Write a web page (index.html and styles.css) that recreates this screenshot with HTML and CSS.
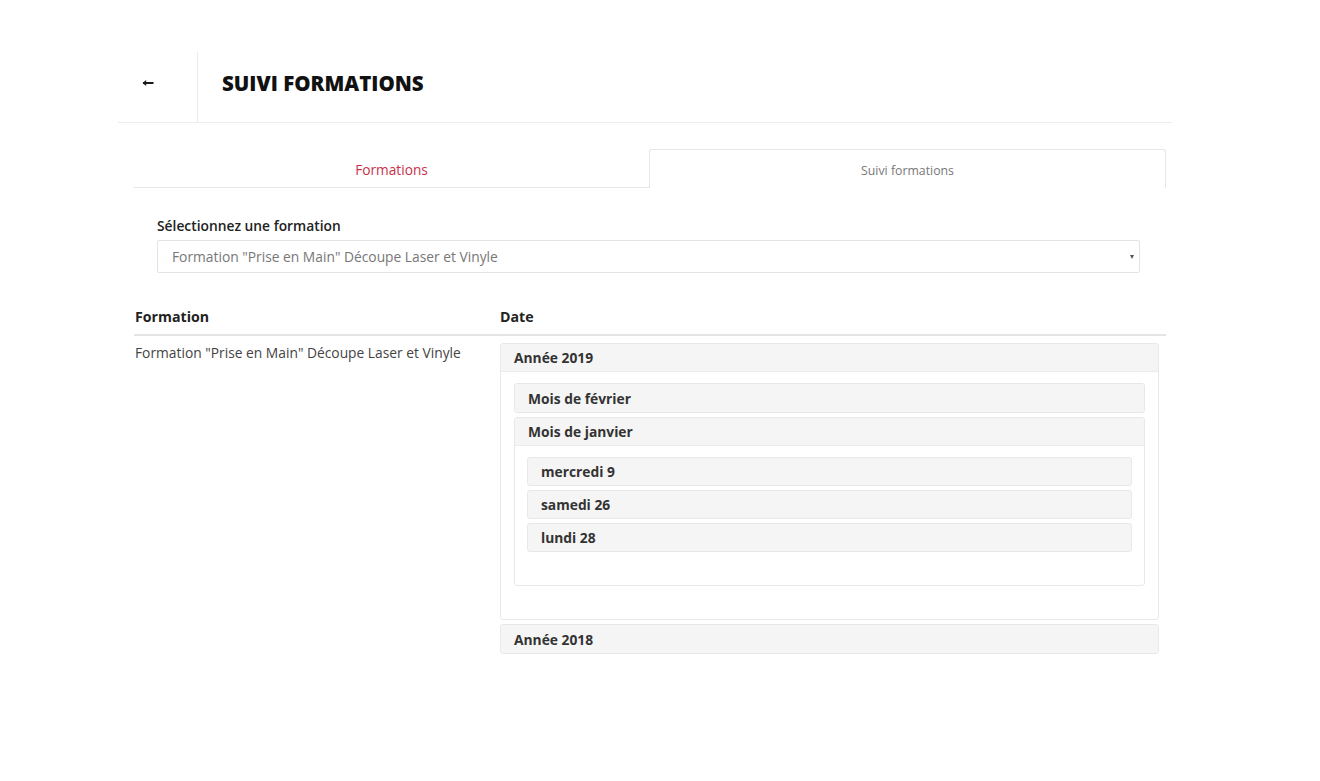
FILE: index.html
```html
<!DOCTYPE html>
<html lang="fr">
<head>
<meta charset="utf-8">
<title>Suivi formations</title>
<link rel="stylesheet" href="styles.css">
</head>
<body>
<div class="page">
  <header class="header">
    <div class="back">
      <svg class="arrow" width="12" height="8" viewBox="0 0 12 8" aria-hidden="true">
        <path d="M1 4 H11.5" stroke="#1a1a1a" stroke-width="2" fill="none"/>
        <path d="M0.5 4 L4.2 1 V7 Z" fill="#1a1a1a"/>
      </svg>
    </div>
    <h1 class="title">SUIVI FORMATIONS</h1>
  </header>
  <div class="content">
    <nav class="tabs">
      <div class="tab">Formations</div>
      <div class="tab active">Suivi formations</div>
    </nav>
    <div class="form">
      <label class="label">Sélectionnez une formation</label>
      <div class="select">
        <span>Formation "Prise en Main" Découpe Laser et Vinyle</span>
        <span class="caret"></span>
      </div>
    </div>
    <div class="table">
      <div class="thead">
        <div class="col1">Formation</div>
        <div class="col2">Date</div>
      </div>
      <div class="trow">
        <div class="col1 cell">Formation "Prise en Main" Découpe Laser et Vinyle</div>
        <div class="col2 dates">
          <div class="panel open">
            <div class="ph">Année 2019</div>
            <div class="pb year-body">
              <div class="panel">
                <div class="ph">Mois de février</div>
              </div>
              <div class="panel open">
                <div class="ph">Mois de janvier</div>
                <div class="pb month-body">
                  <div class="day">mercredi 9</div>
                  <div class="day">samedi 26</div>
                  <div class="day">lundi 28</div>
                </div>
              </div>
            </div>
          </div>
          <div class="panel">
            <div class="ph">Année 2018</div>
          </div>
        </div>
      </div>
    </div>
  </div>
</div>
</body>
</html>
```
FILE: styles.css
```css
* { box-sizing: border-box; }
body {
  margin: 0;
  background: #fff;
  font-family: "Open Sans", "Liberation Sans", sans-serif;
  color: #333;
}
.page {
  width: 1054px;
  margin: 52px 0 0 118px;
}
.header {
  display: flex;
  height: 71px;
  border-bottom: 1px solid #ececec;
}
.back {
  width: 80px;
  border-right: 1px solid #ececec;
  display: flex;
  align-items: center;
  justify-content: center;
  padding-right: 20px;
  padding-bottom: 9px;
}
.arrow {
  display: block;
}
.title {
  margin: 0;
  padding-left: 24px;
  display: flex;
  align-items: center;
  font-size: 20.5px;
  font-weight: 800;
  color: #111;
  margin-top: -9px;
}
.content {
  padding: 26px 6px 0 16px;
}
.tabs {
  display: flex;
  height: 39px;
}
.tab {
  flex: 1;
  display: flex;
  align-items: center;
  justify-content: center;
  font-size: 13.7px;
  color: #c8304a;
  border-bottom: 1px solid #e6e6e6;
  padding-top: 2px;
}
.tab.active {
  font-size: 12.3px;
  color: #777;
  border: 1px solid #e6e6e6;
  border-bottom: none;
  border-radius: 3px 3px 0 0;
}
.form {
  padding: 28px 26px 0 23px;
}
.label {
  display: block;
  font-size: 13.8px;
  font-weight: 600;
  color: #222;
  margin-bottom: 5px;
}
.select {
  height: 33px;
  border: 1px solid #e3e3e3;
  border-radius: 2px;
  display: flex;
  align-items: center;
  justify-content: space-between;
  padding: 0 5px 0 14px;
  font-size: 13.8px;
  color: #777;
}
.caret {
  width: 0;
  height: 0;
  border-left: 2.5px solid transparent;
  border-right: 2.5px solid transparent;
  border-top: 4px solid #555;
}
.table {
  margin-top: 33px;
}
.thead {
  display: flex;
  font-size: 14.2px;
  font-weight: 700;
  color: #222;
  border-bottom: 2px solid #e4e4e4;
  height: 30px;
  align-items: flex-start;
  padding-top: 1px;
}
.col1 {
  width: 366px;
  padding-left: 1px;
}
.col2 {
  flex: 1;
}
.trow {
  display: flex;
  padding-top: 7px;
}
.cell {
  font-size: 13.8px;
  color: #444;
  padding-top: 0;
}
.dates {
  padding-right: 7px;
  display: flex;
  flex-direction: column;
  gap: 4px;
}
.panel {
  border: 1px solid #e8e8e8;
  border-radius: 3px;
  background: #fff;
}
.ph {
  background: #f5f5f5;
  height: 28px;
  display: flex;
  align-items: center;
  padding-left: 13px;
  font-size: 13.8px;
  font-weight: 700;
  color: #333;
  border-radius: 3px;
}
.panel.open > .ph {
  border-bottom: 1px solid #ebebeb;
  border-radius: 3px 3px 0 0;
}
.year-body {
  padding: 11px 13px 33px 13px;
  display: flex;
  flex-direction: column;
  gap: 4px;
}
.month-body {
  padding: 11px 12px 33px 12px;
  display: flex;
  flex-direction: column;
  gap: 4px;
}
.day {
  height: 29px;
  background: #f5f5f5;
  border: 1px solid #e8e8e8;
  border-radius: 3px;
  display: flex;
  align-items: center;
  padding-left: 13px;
  font-size: 13.8px;
  font-weight: 700;
  color: #333;
}
```
